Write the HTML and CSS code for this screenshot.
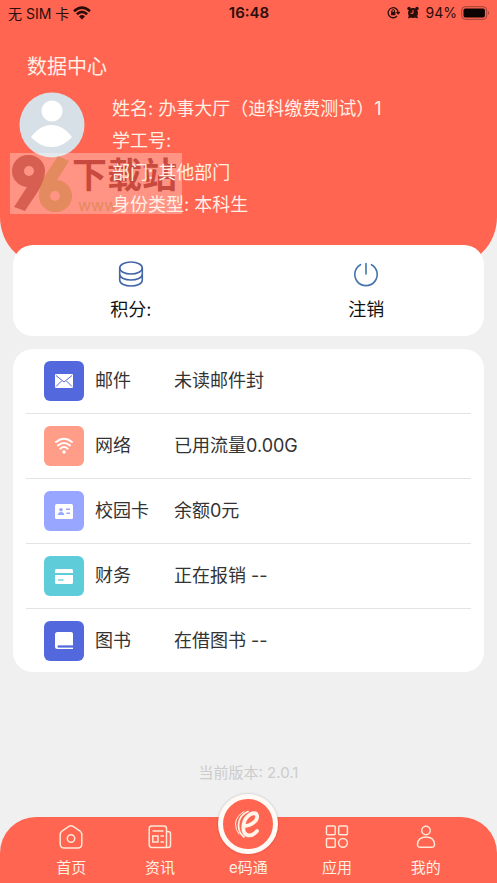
FILE: index.html
```html
<!DOCTYPE html>
<html lang="zh-CN">
<head>
<meta charset="utf-8">
<meta name="viewport" content="width=device-width, initial-scale=1">
<title>数据中心</title>
<link rel="stylesheet" href="styles.css">
</head>
<body>
<div class="app">
  <header class="hero">
    <div class="status">
      <div class="status-left">
        <span>无 SIM 卡</span>
        <svg width="18" height="14" viewBox="0 0 18 14" fill="none" stroke="#2b0d0a" stroke-width="2.6"><path d="M1 5.2Q9-2 17 5.2M3.900 8.200Q9 3.700 14.100 8.200"/><path d="M9 13.500L6 10.400Q9 7.800 12 10.400Z" fill="#2b0d0a" stroke="none"/></svg>
      </div>
      <strong class="clock">16:48</strong>
      <div class="status-right">
        <svg width="13" height="13" viewBox="0 0 13 13" fill="none" stroke="#2b0d0a" stroke-width="1.3"><path d="M10 10A5 5 0 1 1 11.200 6.500M9.500 6L11.200 7.800L12.800 6"/><path d="M4.900 6V4.900A1.300 1.300 0 0 1 7.500 4.900V6" stroke-width="1"/><rect x="4" y="5.800" width="4.400" height="3.400" rx=".5" fill="#2b0d0a" stroke="none"/></svg>
        <svg class="alarm" width="12" height="13" viewBox="0 0 12 13" fill="#2b0d0a"><circle cx="6" cy="7" r="5"/><circle cx="2" cy="2.500" r="1.700"/><circle cx="10" cy="2.500" r="1.700"/><path d="M1 12.500L2 9H10L11 12.500L8 11.500H4Z"/><path d="M6 4V7.300H3.500" fill="none" stroke="#ff6550"/></svg>
        <span>94%</span>
        <svg width="29" height="14" viewBox="0 0 29 14"><rect x=".7" y=".7" width="25" height="12.600" rx="3.500" fill="none" stroke="#9d4035"/><rect x="2.500" y="2.500" width="21.400" height="9" rx="1.800" fill="#0d0302"/><path d="M27 5Q29 7 27 9Z" fill="#9d4035"/></svg>
      </div>
    </div>
    <h1 class="title">数据中心</h1>
    <div class="profile">
      <svg class="avatar" width="66" height="66" viewBox="0 0 66 66"><circle cx="33" cy="33" r="32.500" fill="#d8e0e7"/><circle cx="33" cy="19" r="10.500" fill="#fff"/><path d="M12 45C18 37 25 33 32.500 33S47 37 53 45C46 52 40 55 32.500 55S19 52 12 45Z" fill="#fff"/></svg>
      <div class="watermark" aria-hidden="true">
        <svg width="62" height="61" viewBox="0 0 62 61"><path fill="#c14438" fill-opacity=".65" fill-rule="evenodd" d="M19 2A16 16 0 0 1 35 18C35 32 24 43 15 58L4 54L17 34A16 16 0 0 1 19 2ZM19 13A5 5 0 1 0 19 23A5 5 0 1 0 19 13Z"/><path fill="#d08345" fill-opacity=".6" fill-rule="evenodd" d="M45 59A16 16 0 0 1 29 43C29 29 39 17 48 3L59 8L47 27A16 16 0 0 1 45 59ZM45 48A5 5 0 1 0 45 38A5 5 0 1 0 45 48Z"/></svg>
        <div class="watermark-text"><span class="watermark-name">下载站</span><span class="watermark-url">www.</span></div>
      </div>
      <div class="info">
        <p>姓名: 办事大厅（迪科缴费测试）1</p>
        <p>学工号:</p>
        <p>部门: 其他部门</p>
        <p>身份类型: 本科生</p>
      </div>
    </div>
  </header>

  <main class="content">
    <section class="card actions">
      <button type="button" class="action">
        <svg width="28" height="28" viewBox="0 0 28 28" fill="none" stroke="#4467a8" stroke-width="1.600"><ellipse cx="14" cy="8" rx="11.300" ry="6"/><path d="M2.700 8V20C2.700 28 25.300 28 25.300 20V8M2.700 14C2.700 22 25.300 22 25.300 14"/></svg>
        <span>积分:</span>
      </button>
      <button type="button" class="action">
        <svg width="28" height="28" viewBox="0 0 28 28" fill="none" stroke="#4474ad" stroke-width="1.600" stroke-linecap="round"><path d="M14 3.500V14M8.500 4.700A11.200 11.200 0 1 0 19.500 4.700"/></svg>
        <span>注销</span>
      </button>
    </section>

    <ul class="card list">
      <li class="row">
        <span class="badge indigo"><svg width="18" height="14" viewBox="0 0 18 14"><rect width="18" height="14" rx="1" fill="#fff"/><path d="M1 1.500L9 8L17 1.500M1 12.500L6.500 7M17 12.500L11.500 7" fill="none" stroke="#5468dd"/></svg></span>
        <span class="label">邮件</span><span class="value">未读邮件封</span>
      </li>
      <li class="row">
        <span class="badge coral"><svg width="20" height="18" viewBox="0 0 20 18" fill="none" stroke="#fff" stroke-width="1.900" stroke-linecap="round"><path d="M2 5Q10-1.500 18 5M4 8.500Q10 3.500 16 8.500M6.300 11.700Q10 8.500 13.700 11.700"/><circle cx="10" cy="15" r="1.800" fill="#fff" stroke="none"/></svg></span>
        <span class="label">网络</span><span class="value">已用流量0.00G</span>
      </li>
      <li class="row">
        <span class="badge lavender"><svg width="18" height="15" viewBox="0 0 18 15"><rect width="18" height="15" rx="1.500" fill="#fff"/><g fill="#98a6ff"><circle cx="6" cy="5.800" r="1.800"/><path d="M2.800 11Q3 8 6 8T9.200 11Z"/><path d="M11 4.500H15V6H11ZM11.500 8.500H15V10H11.500Z"/></g></svg></span>
        <span class="label">校园卡</span><span class="value">余额0元</span>
      </li>
      <li class="row">
        <span class="badge teal"><svg width="18" height="15" viewBox="0 0 18 15"><path d="M0 4V1.500Q0 0 1.500 0H16.500Q18 0 18 1.500V4ZM0 6H18V13.500Q18 15 16.500 15H1.500Q0 15 0 13.500Z" fill="#fff"/><path d="M3 11H8.500" stroke="#5ecdd9" stroke-width="1.300"/></svg></span>
        <span class="label">财务</span><span class="value">正在报销 --</span>
      </li>
      <li class="row">
        <span class="badge indigo"><svg width="18" height="18" viewBox="0 0 18 18"><path d="M0 2.500Q0 0 2.500 0H16Q18 0 18 2V13.500H3V15.500H18V17H2.500Q0 17 0 14.500Z" fill="#fff"/><path d="M2.500 14.500H18" stroke="#5468dd" stroke-width="1.500"/></svg></span>
        <span class="label">图书</span><span class="value">在借图书 --</span>
      </li>
    </ul>
    <p class="version">当前版本: 2.0.1</p>
  </main>

  <nav class="tabs">
    <a class="tab" href="#home">
      <svg width="26" height="26" viewBox="0 0 26 26" fill="none" stroke="#ffe8d8" stroke-width="1.500"><path d="M10.500 2.700Q13 .8 15.500 2.700L22 7Q23.800 8.500 23.800 11V20Q23.800 24 19.800 24H6.200Q2.200 24 2.200 20V11Q2.200 8.500 4 7Z"/><circle cx="13" cy="14.500" r="3.700"/></svg>
      <span>首页</span>
    </a>
    <a class="tab" href="#news">
      <svg width="26" height="26" viewBox="0 0 26 26" fill="none" stroke="#ffe8d8" stroke-width="1.500"><path d="M19.500 23.500H5Q2.200 23.500 2.200 20.500V4.500Q2.200 2 4.700 2H17Q19.500 2 19.500 4.500V23.500ZM19.500 7.500H21Q23.500 7.500 23.500 10V21Q23.500 23.500 21 23.500H19.500M5.500 7H16.500M13.500 12H17M13.500 18H17"/><rect x="5.800" y="12" width="5.200" height="6"/></svg>
      <span>资讯</span>
    </a>
    <a class="tab tab-code" href="#code">
      <span class="code-mark"><svg width="48" height="48" viewBox="0 0 48 48" fill="none" stroke="#fff4e8" stroke-linecap="round" stroke-linejoin="round"><path d="M20 26C28 26 34 20 33 15.500C31.500 10 21 15 19.500 25C18 37 27 38 33 31" stroke-width="3.800"/><path d="M24 11.500Q15 15 14.500 25Q14.500 33 20 37" stroke-width="1.700"/><path d="M20 11.500Q12 16 11.500 24Q11.500 30 15 34" stroke-width="1"/></svg></span>
      <span>e码通</span>
    </a>
    <a class="tab" href="#apps">
      <svg width="26" height="26" viewBox="0 0 26 26" fill="none" stroke="#ffe8d8" stroke-width="1.500"><rect x="2.500" y="2" width="8.700" height="8.700" rx="1"/><rect x="14.700" y="2" width="8.700" height="8.700" rx="1"/><rect x="2.500" y="14.500" width="8.700" height="8.700" rx="1"/><circle cx="19" cy="18.800" r="4.400"/></svg>
      <span>应用</span>
    </a>
    <a class="tab" href="#me">
      <svg width="26" height="26" viewBox="0 0 26 26" fill="none" stroke="#ffe8d8" stroke-width="1.500"><circle cx="13" cy="6.500" r="4.200"/><path d="M4.500 20C5 15 8.500 13 13 13S21 15 21.500 20Q21.700 23.300 18.500 23.300H7.500Q4.300 23.300 4.500 20Z"/></svg>
      <span>我的</span>
    </a>
  </nav>
</div>
</body>
</html>
```
FILE: styles.css
```css
* {
  box-sizing: border-box;
}

body {
  margin: 0;
  background: #f0f0f0;
  color: #333;
  font-family: Inter, "Noto Sans CJK SC", sans-serif;
  font-size: 18px;
  font-weight: 400;
}

h1,
p,
ul {
  margin: 0;
  padding: 0;
}

svg {
  display: block;
  flex: none;
}

.app {
  display: flex;
  flex-direction: column;
  min-height: 100vh;
}

.hero {
  padding-bottom: 46px;
  border-radius: 0 0 50px 50px;
  background: #ff6550;
  color: #fff0e6;
}

.status {
  display: grid;
  grid-template-columns: 1fr auto 1fr;
  align-items: center;
  height: 25px;
  padding: 0 7px 0 8px;
  color: #2b0d0a;
  font-size: 14px;
}

.status-left,
.status-right {
  display: flex;
  align-items: center;
  gap: 4px;
}

.status-right {
  justify-content: flex-end;
  font-size: 14px;
}

.alarm {
  margin: 0 3px;
}

.clock {
  font-size: 15px;
  font-weight: 600;
}

.title {
  padding: 26px 27px 0;
  font-size: 20px;
  font-weight: 400;
  line-height: 32px;
}

.profile {
  position: relative;
  display: flex;
  gap: 27px;
  padding: 9px 19px 0;
}

.info {
  position: relative;
  padding-top: 1px;
  line-height: 32px;
}

.watermark {
  position: absolute;
  top: 70px;
  left: 10px;
  display: flex;
  width: 172px;
  height: 61px;
  background: rgba(255, 255, 255, 0.3);
}

.watermark-text {
  display: flex;
  flex-direction: column;
}

.watermark-name {
  color: rgba(176, 42, 32, 0.7);
  font-size: 35px;
  font-weight: 700;
  line-height: 44px;
}

.watermark-url {
  padding-left: 6px;
  color: rgba(208, 131, 69, 0.6);
  font-size: 16px;
  line-height: 16px;
}

.content {
  display: flex;
  flex: 1;
  flex-direction: column;
  gap: 13px;
  margin-top: -22px;
  padding: 0 13px;
}

.card {
  border-radius: 20px;
  background: #fff;
}

.actions {
  display: flex;
}

.action {
  display: flex;
  flex: 1;
  flex-direction: column;
  align-items: center;
  gap: 10px;
  padding: 15px 0 14px;
  border: 0;
  background: none;
  color: #111;
  font: inherit;
  line-height: 24px;
}

.list {
  padding: 0 13px;
  list-style: none;
}

.row {
  display: flex;
  align-items: center;
  height: 65px;
  padding-left: 18px;
  border-bottom: 1px solid #e4e4e4;
  line-height: 24px;
}

.row:last-child {
  height: 63px;
  border-bottom: 0;
}

.badge {
  display: grid;
  place-items: center;
  width: 40px;
  height: 40px;
  margin-right: 11px;
  border-radius: 6px;
}

.indigo {
  background: #5468dd;
}

.coral {
  background: #ff9d88;
}

.lavender {
  background: #98a6ff;
}

.teal {
  background: #5ecdd9;
}

.label {
  width: 79px;
}

.version {
  margin-top: auto;
  padding-bottom: 32px;
  color: #ccc;
  font-size: 15px;
  line-height: 24px;
  text-align: center;
}

.tabs {
  display: flex;
  padding: 7px 27px 3px;
  border-radius: 36px 36px 0 0;
  background: #ff6550;
  font-size: 15px;
}

.tab {
  position: relative;
  display: flex;
  flex: 1;
  flex-direction: column;
  align-items: center;
  justify-content: flex-end;
  gap: 6px;
  color: #fff0e6;
  line-height: 24px;
  text-decoration: none;
}

.code-mark {
  position: absolute;
  bottom: 26px;
  padding: 1px;
  border: 5px solid #fffaf5;
  border-radius: 50%;
  background: #ff6550;
  box-shadow: 0 0 3px rgba(0, 0, 0, 0.2);
}
```
